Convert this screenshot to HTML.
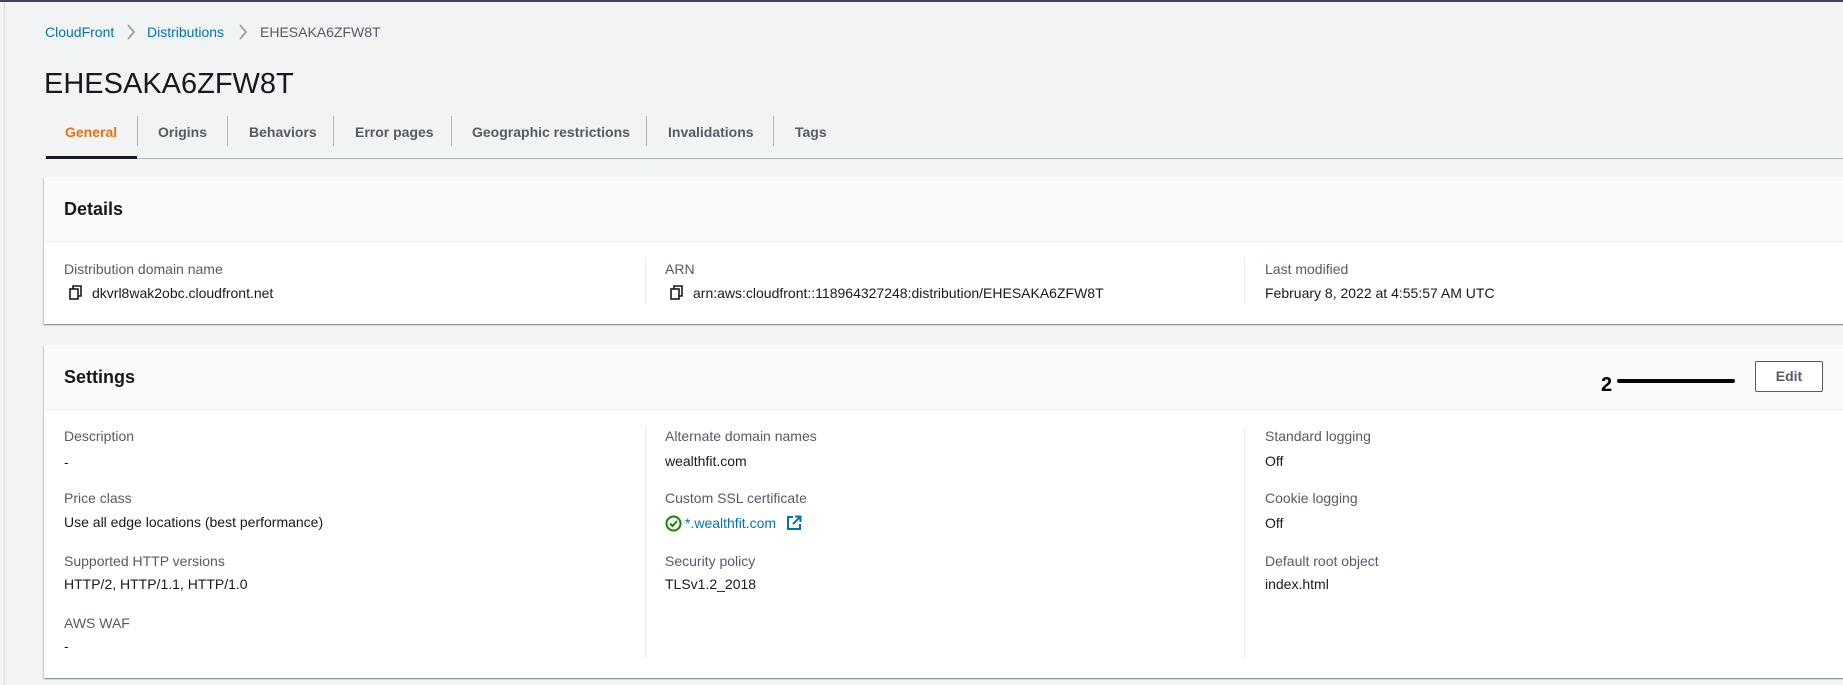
<!DOCTYPE html>
<html><head><meta charset="utf-8"><style>
*{margin:0;padding:0;box-sizing:border-box}
body{width:1843px;height:685px;overflow:hidden;background:#f2f3f3;font-family:"Liberation Sans",Arial,sans-serif;color:#16191f;position:relative}
.a{position:absolute;white-space:nowrap}
.topb{position:absolute;left:0;top:0;width:1843px;height:2px;background:#414750}
.leftb{position:absolute;left:4px;top:2px;width:1px;height:683px;background:#d5dbdb}
.bc{top:23px;font-size:14px;line-height:18px}
.bc a{color:#0073bb;text-decoration:none}
.tab{top:123px;font-size:14px;font-weight:bold;color:#545b64;line-height:18px}
.sep{position:absolute;top:116px;width:1px;height:30px;background:#aab7b8}
.card{position:absolute;left:44px;width:1820px;background:#fff;box-shadow:0 1px 1px 0 rgba(0,28,36,.3),1px 1px 1px 0 rgba(0,28,36,.15),-1px 1px 1px 0 rgba(0,28,36,.15)}
.hdr{background:#fafafa;border-bottom:1px solid #eaeded;height:65px;position:relative}
.h2{position:absolute;left:20px;font-size:18px;font-weight:bold;top:22px}
.lbl{font-size:14px;color:#545b64;line-height:17px}
.val{font-size:14px;color:#16191f;line-height:17px}
.vd{position:absolute;width:1px;background:#eaeded}
</style></head><body>
<div class="topb"></div><div class="leftb"></div>
<div class="a bc" style="left:45px"><a>CloudFront</a></div>
<svg class="a" style="left:126px;top:24px" width="10" height="16"><path d="M2 1l6 7-6 7" fill="none" stroke="#879596" stroke-width="1.5"/></svg>
<div class="a bc" style="left:147px"><a>Distributions</a></div>
<svg class="a" style="left:238px;top:24px" width="10" height="16"><path d="M2 1l6 7-6 7" fill="none" stroke="#879596" stroke-width="1.5"/></svg>
<div class="a bc" style="left:260px;color:#545b64">EHESAKA6ZFW8T</div>
<div class="a" style="left:44px;top:67px;font-size:29px;line-height:34px">EHESAKA6ZFW8T</div>

<div class="a tab" style="left:65px;color:#ec7211">General</div>
<div class="sep" style="left:137px"></div>
<div class="a tab" style="left:158px">Origins</div>
<div class="sep" style="left:227px"></div>
<div class="a tab" style="left:249px">Behaviors</div>
<div class="sep" style="left:333px"></div>
<div class="a tab" style="left:355px">Error pages</div>
<div class="sep" style="left:451px"></div>
<div class="a tab" style="left:472px">Geographic restrictions</div>
<div class="sep" style="left:646px"></div>
<div class="a tab" style="left:668px">Invalidations</div>
<div class="sep" style="left:773px"></div>
<div class="a tab" style="left:795px">Tags</div>
<div class="a" style="left:45px;top:158px;width:1800px;height:1px;background:#aab7b8"></div>
<div class="a" style="left:46px;top:156px;width:91px;height:3px;background:#16191f"></div>

<div class="card" style="top:177px;height:147px">
 <div class="hdr"><div class="h2">Details</div></div>
</div>
<div class="a lbl" style="left:64px;top:261px">Distribution domain name</div>
<svg class="a" style="left:69px;top:285px" width="14" height="15"><rect x="1" y="4" width="8" height="10" fill="none" stroke="#16191f" stroke-width="1.6"/><path d="M4 4V1h8v10H9" fill="none" stroke="#16191f" stroke-width="1.6"/></svg>
<div class="a val" style="left:92px;top:285px">dkvrl8wak2obc.cloudfront.net</div>
<div class="vd" style="left:645px;top:258px;height:46px"></div>
<div class="a lbl" style="left:665px;top:261px">ARN</div>
<svg class="a" style="left:670px;top:285px" width="14" height="15"><rect x="1" y="4" width="8" height="10" fill="none" stroke="#16191f" stroke-width="1.6"/><path d="M4 4V1h8v10H9" fill="none" stroke="#16191f" stroke-width="1.6"/></svg>
<div class="a val" style="left:693px;top:285px">arn:aws:cloudfront::118964327248:distribution/EHESAKA6ZFW8T</div>
<div class="vd" style="left:1244px;top:258px;height:46px"></div>
<div class="a lbl" style="left:1265px;top:261px">Last modified</div>
<div class="a val" style="left:1265px;top:285px">February 8, 2022 at 4:55:57 AM UTC</div>

<div class="card" style="top:345px;height:333px">
 <div class="hdr"><div class="h2">Settings</div></div>
</div>
<div class="a" style="left:1601px;top:374px;font-size:20px;font-weight:bold;color:#000">2</div>
<div class="a" style="left:1617px;top:379px;width:118px;height:4px;border-radius:2px;background:#000"></div>
<div class="a" style="left:1755px;top:361px;width:68px;height:31px;border:1px solid #545b64;border-radius:2px;background:#fff;font-size:14px;font-weight:bold;color:#545b64;text-align:center;line-height:29px">Edit</div>

<div class="a lbl" style="left:64px;top:428px">Description</div>
<div class="a val" style="left:64px;top:454px">-</div>
<div class="a lbl" style="left:64px;top:490px">Price class</div>
<div class="a val" style="left:64px;top:514px">Use all edge locations (best performance)</div>
<div class="a lbl" style="left:64px;top:553px">Supported HTTP versions</div>
<div class="a val" style="left:64px;top:576px">HTTP/2, HTTP/1.1, HTTP/1.0</div>
<div class="a lbl" style="left:64px;top:615px">AWS WAF</div>
<div class="a val" style="left:64px;top:638px">-</div>

<div class="vd" style="left:645px;top:427px;height:231px"></div>
<div class="a lbl" style="left:665px;top:428px">Alternate domain names</div>
<div class="a val" style="left:665px;top:453px">wealthfit.com</div>
<div class="a lbl" style="left:665px;top:490px">Custom SSL certificate</div>
<svg class="a" style="left:665px;top:515px" width="17" height="17"><circle cx="8.5" cy="8.5" r="7" fill="none" stroke="#1d8102" stroke-width="2"/><path d="M5 8.5l2.5 2.5 4.5-5" fill="none" stroke="#1d8102" stroke-width="2"/></svg>
<div class="a val" style="left:685px;top:515px;color:#0073bb">*.wealthfit.com</div>
<svg class="a" style="left:786px;top:515px" width="16" height="16"><path d="M7 2H2v12h12V9" fill="none" stroke="#0073bb" stroke-width="2"/><path d="M9 1.5h5.5V7M14 2L7 9" fill="none" stroke="#0073bb" stroke-width="2"/></svg>
<div class="a lbl" style="left:665px;top:553px">Security policy</div>
<div class="a val" style="left:665px;top:576px">TLSv1.2_2018</div>

<div class="vd" style="left:1244px;top:427px;height:231px"></div>
<div class="a lbl" style="left:1265px;top:428px">Standard logging</div>
<div class="a val" style="left:1265px;top:453px">Off</div>
<div class="a lbl" style="left:1265px;top:490px">Cookie logging</div>
<div class="a val" style="left:1265px;top:515px">Off</div>
<div class="a lbl" style="left:1265px;top:553px">Default root object</div>
<div class="a val" style="left:1265px;top:576px">index.html</div>
</body></html>
